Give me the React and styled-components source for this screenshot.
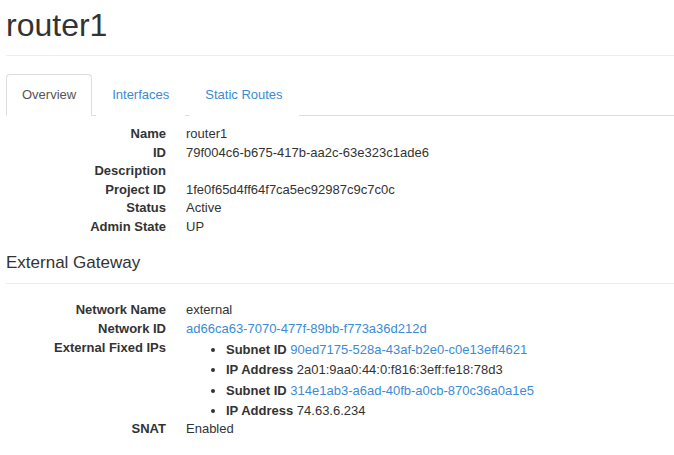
import React from 'react';
import styled, { createGlobalStyle } from 'styled-components';

const GlobalStyle = createGlobalStyle`
  body {
    margin: 0;
    background: #fff;
    color: #333;
    font-family: "Liberation Sans", Arial, sans-serif;
    font-size: 13px;
    line-height: 1.428571;
  }
`;

const Page = styled.div`
  padding-left: 6px;
`;

const PageHeader = styled.div`
  margin-top: 8px;
  padding-bottom: 12px;
  border-bottom: 1px solid #eee;
`;

const Title = styled.h1`
  margin: 0;
  font-size: 32px;
  font-weight: 400;
  line-height: 35px;
  color: #333;
`;

const Tabs = styled.ul`
  display: flex;
  list-style: none;
  margin: 18px 0 0;
  padding: 0;
  border-bottom: 1px solid #ddd;
`;

const Tab = styled.li`
  margin-right: 4px;
  margin-bottom: -1px;
  padding: 10px 15px;
  line-height: 20px;
  border: 1px solid ${(p) => (p.$active ? '#ddd' : 'transparent')};
  border-bottom-color: transparent;
  border-radius: 4px 4px 0 0;
  background: #fff;
  color: ${(p) => (p.$active ? '#555' : '#3b8bd5')};
  cursor: pointer;
`;

const DetailList = styled.dl`
  display: grid;
  grid-template-columns: 160px 1fr;
  column-gap: 20px;
  margin: ${(p) => p.$top || '9px'} 0 0;
  line-height: 18.57px;
`;

const Term = styled.dt`
  font-weight: bold;
  text-align: right;
  white-space: nowrap;
`;

const Desc = styled.dd`
  margin: 0;
  min-height: 18.57px;
`;

const Link = styled.a`
  color: #3b8bd5;
  text-decoration: none;
`;

const SectionTitle = styled.h4`
  margin: 17px 0 0;
  padding-bottom: 11px;
  border-bottom: 1px solid #eee;
  font-size: 17px;
  font-weight: 400;
  line-height: 19px;
`;

const IpList = styled.ul`
  margin: 0 0 -1px;
  padding-left: 40px;

  li {
    padding-top: 2px;
    line-height: 18.5px;
  }
`;

const overview = [
  ['Name', 'router1'],
  ['ID', '79f004c6-b675-417b-aa2c-63e323c1ade6'],
  ['Description', ''],
  ['Project ID', '1fe0f65d4ff64f7ca5ec92987c9c7c0c'],
  ['Status', 'Active'],
  ['Admin State', 'UP'],
];

const fixedIps = [
  { label: 'Subnet ID', value: '90ed7175-528a-43af-b2e0-c0e13eff4621', link: true },
  { label: 'IP Address', value: '2a01:9aa0:44:0:f816:3eff:fe18:78d3' },
  { label: 'Subnet ID', value: '314e1ab3-a6ad-40fb-a0cb-870c36a0a1e5', link: true },
  { label: 'IP Address', value: '74.63.6.234' },
];

const App = () => {
  return (
    <Page>
      <GlobalStyle />
      <PageHeader>
        <Title>router1</Title>
      </PageHeader>

      <Tabs>
        <Tab $active>Overview</Tab>
        <Tab>Interfaces</Tab>
        <Tab>Static Routes</Tab>
      </Tabs>

      <DetailList>
        {overview.map(([label, value]) => (
          <React.Fragment key={label}>
            <Term>{label}</Term>
            <Desc>{value}</Desc>
          </React.Fragment>
        ))}
      </DetailList>

      <SectionTitle>External Gateway</SectionTitle>

      <DetailList $top="17px">
        <Term>Network Name</Term>
        <Desc>external</Desc>
        <Term>Network ID</Term>
        <Desc>
          <Link href="#">ad66ca63-7070-477f-89bb-f773a36d212d</Link>
        </Desc>
        <Term>External Fixed IPs</Term>
        <Desc>
          <IpList>
            {fixedIps.map((ip) => (
              <li key={ip.value}>
                <b>{ip.label}</b>{' '}
                {ip.link ? <Link href="#">{ip.value}</Link> : ip.value}
              </li>
            ))}
          </IpList>
        </Desc>
        <Term>SNAT</Term>
        <Desc>Enabled</Desc>
      </DetailList>
    </Page>
  );
};

export default App;
